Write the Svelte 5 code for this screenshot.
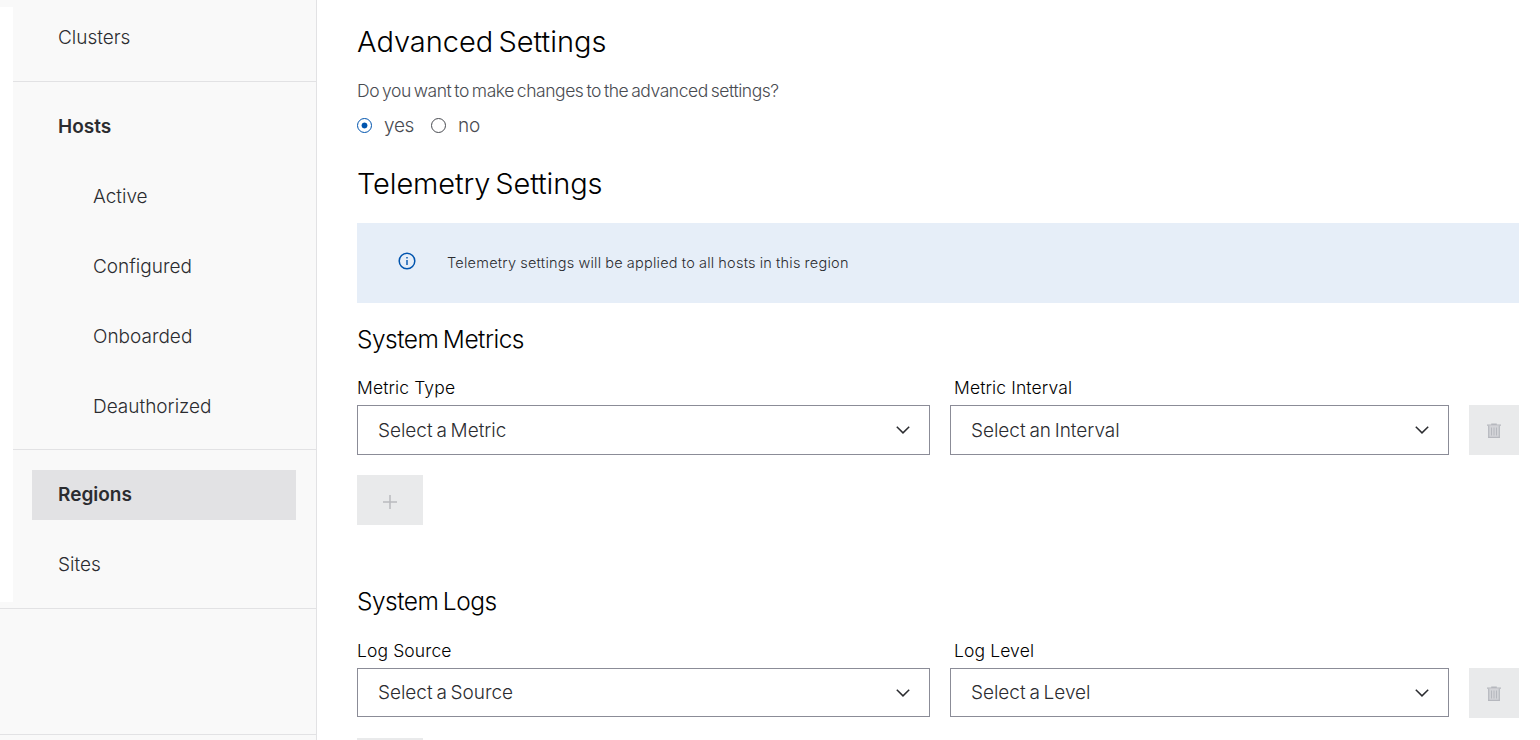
<script>
  const groups = [
    { items: [{ label: 'Clusters' }], size: 'first' },
    {
      items: [
        { label: 'Hosts', bold: true },
        { label: 'Active', sub: true },
        { label: 'Configured', sub: true },
        { label: 'Onboarded', sub: true },
        { label: 'Deauthorized', sub: true }
      ],
      size: 'hosts'
    },
    { items: [{ label: 'Regions', bold: true, active: true }, { label: 'Sites' }], size: 'places' }
  ];

  const sections = [
    {
      title: 'System Metrics',
      key: 'metrics',
      fields: [
        { label: 'Metric Type', value: 'Select a Metric' },
        { label: 'Metric Interval', value: 'Select an Interval' }
      ]
    },
    {
      title: 'System Logs',
      key: 'logs',
      fields: [
        { label: 'Log Source', value: 'Select a Source' },
        { label: 'Log Level', value: 'Select a Level' }
      ]
    }
  ];
</script>

<div class="page">
  <nav class="sidebar">
    {#each groups as group}
      <ul class="group {group.size}">
        {#each group.items as item}
          <li class="item" class:sub={item.sub} class:bold={item.bold} class:active={item.active}>
            {item.label}
          </li>
        {/each}
      </ul>
    {/each}
    <div class="rest"></div>
  </nav>

  <main class="content">
    <h1>Advanced Settings</h1>
    <p class="question">Do you want to make changes to the advanced settings?</p>
    <div class="radios">
      <span class="radio checked"></span><span class="yes">yes</span>
      <span class="radio"></span><span>no</span>
    </div>
    <h1 class="telemetry">Telemetry Settings</h1>
    <div class="alert">
      <svg width="18" height="18" viewBox="0 0 18 18" fill="none" stroke="#0054ae">
        <circle cx="9" cy="9" r="7.8" stroke-width="1.5" />
        <path d="M9 8v5M9 5v1.4" stroke-width="1.4" />
      </svg>
      <span>Telemetry settings will be applied to all hosts in this region</span>
    </div>

    {#each sections as section}
      <section class={section.key}>
        <h2>{section.title}</h2>
        <div class="row">
          {#each section.fields as field}
            <div class="field">
              <span class="label">{field.label}</span>
              <div class="select">
                <span>{field.value}</span>
                <svg width="16" height="10" viewBox="0 0 16 10" fill="none" stroke="#2b2c30" stroke-width="1.5">
                  <path d="M1.8 1.7 8 7.9l6.2-6.2" />
                </svg>
              </div>
            </div>
          {/each}
          <div class="button trash">
            <svg width="14" height="16" viewBox="0 0 14 16">
              <path d="M4.2.4h5.6v1H14v1.4H0V1.4h4.2z" fill="#b6b8be" />
              <path d="M1.7 2.6v11.8h10.6V2.6" fill="#d3d4d8" stroke="#b6b8be" stroke-width="1.2" />
              <path d="M1.1 14.5h11.8M4.5 4.5v8M7 4.5v8M9.5 4.5v8" stroke="#b6b8be" stroke-width="1" />
            </svg>
          </div>
        </div>
        <div class="button add">
          <svg width="14" height="14" viewBox="0 0 14 14" stroke="#b9babf" stroke-width="1.5">
            <path d="M0 7h14M7 0v14" />
          </svg>
        </div>
      </section>
    {/each}
  </main>
</div>

<style>
  :global(body) {
    margin: 0;
    overflow: hidden;
    background: #fff;
  }
  .page {
    display: flex;
    width: 1540px;
    height: 740px;
    overflow: hidden;
    font-family: Inter, sans-serif;
    font-weight: 300;
    color: #2b2c30;
    white-space: nowrap;
  }
  .sidebar {
    box-sizing: border-box;
    flex: none;
    width: 317px;
    border-right: 1px solid #e2e2e4;
    background: linear-gradient(#fff, #fff) 0 7px / 13px 595px no-repeat, #f9f9f9;
  }
  .group {
    box-sizing: border-box;
    margin: 0 0 0 13px;
    padding: 20px 20px 0 19px;
    border-bottom: 1px solid #e2e2e4;
    list-style: none;
  }
  .first {
    height: 82px;
    padding-top: 13px;
  }
  .hosts {
    height: 368px;
  }
  .places {
    height: 159px;
    margin-left: 0;
    padding-left: 32px;
  }
  .rest {
    height: 125px;
    border-bottom: 1px solid #e2e2e4;
  }
  .item {
    box-sizing: border-box;
    height: 50px;
    margin-bottom: 20px;
    padding-left: 26px;
    font-size: 19px;
    line-height: 50px;
  }
  .sub {
    padding-left: 61px;
  }
  .bold {
    font-weight: 600;
  }
  .active {
    background: #e2e2e4;
  }
  .content {
    flex: none;
    width: 1162px;
    padding-left: 40px;
  }
  h1 {
    margin: 22px 0 0;
    color: #000;
    font-size: 29px;
    font-weight: 300;
    line-height: 40px;
    word-spacing: -3px;
  }
  .question {
    margin: 18px 0 0;
    color: #494b51;
    font-size: 17.5px;
    line-height: 22px;
    letter-spacing: -0.45px;
    word-spacing: -1.5px;
  }
  .radios {
    display: flex;
    align-items: center;
    height: 24px;
    margin-top: 11px;
    color: #494b51;
    font-size: 19px;
    letter-spacing: -0.3px;
  }
  .radio {
    box-sizing: border-box;
    width: 15px;
    height: 15px;
    margin-right: 12px;
    border: 1px solid #494b51;
    border-radius: 50%;
  }
  .checked {
    border-color: #0054ae;
    background: radial-gradient(circle, #0054ae 2.6px, transparent 3.3px);
  }
  .yes {
    width: 47px;
  }
  .telemetry {
    margin-top: 27px;
    letter-spacing: -0.12px;
  }
  .alert {
    display: flex;
    align-items: center;
    height: 80px;
    margin-top: 19px;
    padding-left: 41px;
    box-sizing: border-box;
    background: #e6eef8;
    font-size: 14.5px;
    letter-spacing: 0.24px;
    word-spacing: -0.4px;
  }
  .alert span {
    margin-bottom: 2px;
  }
  .alert svg {
    margin: 0 31px 4px 0;
  }
  section {
    height: 262px;
    margin-top: 20px;
  }
  h2 {
    margin: 0;
    color: #000;
    font-size: 24.5px;
    font-weight: 300;
    line-height: 32px;
    letter-spacing: -0.5px;
    word-spacing: -2px;
  }
  .logs {
    margin-top: 0;
  }
  .row {
    display: grid;
    grid-template-columns: 573px 499px 50px;
    column-gap: 20px;
    align-items: start;
    margin-top: 22px;
  }
  .logs .row {
    margin-top: 23px;
  }
  .label {
    display: block;
    height: 28px;
    color: #000;
    font-size: 17.5px;
    line-height: 22px;
    letter-spacing: 0.12px;
  }
  .field + .field .label {
    padding-left: 4px;
  }
  .select {
    box-sizing: border-box;
    display: flex;
    align-items: center;
    justify-content: space-between;
    height: 50px;
    padding: 0 18px 0 20px;
    border: 1px solid #8b8c97;
    font-size: 19px;
    letter-spacing: -0.03px;
    word-spacing: -1.5px;
  }
  .logs .select {
    height: 49px;
  }
  .button {
    display: flex;
    align-items: center;
    justify-content: center;
    height: 50px;
    background: #e9eaeb;
  }
  .trash {
    box-sizing: border-box;
    margin-top: 28px;
    padding-top: 2px;
  }
  .add {
    box-sizing: border-box;
    width: 66px;
    margin-top: 20px;
    padding-top: 4px;
  }
</style>
